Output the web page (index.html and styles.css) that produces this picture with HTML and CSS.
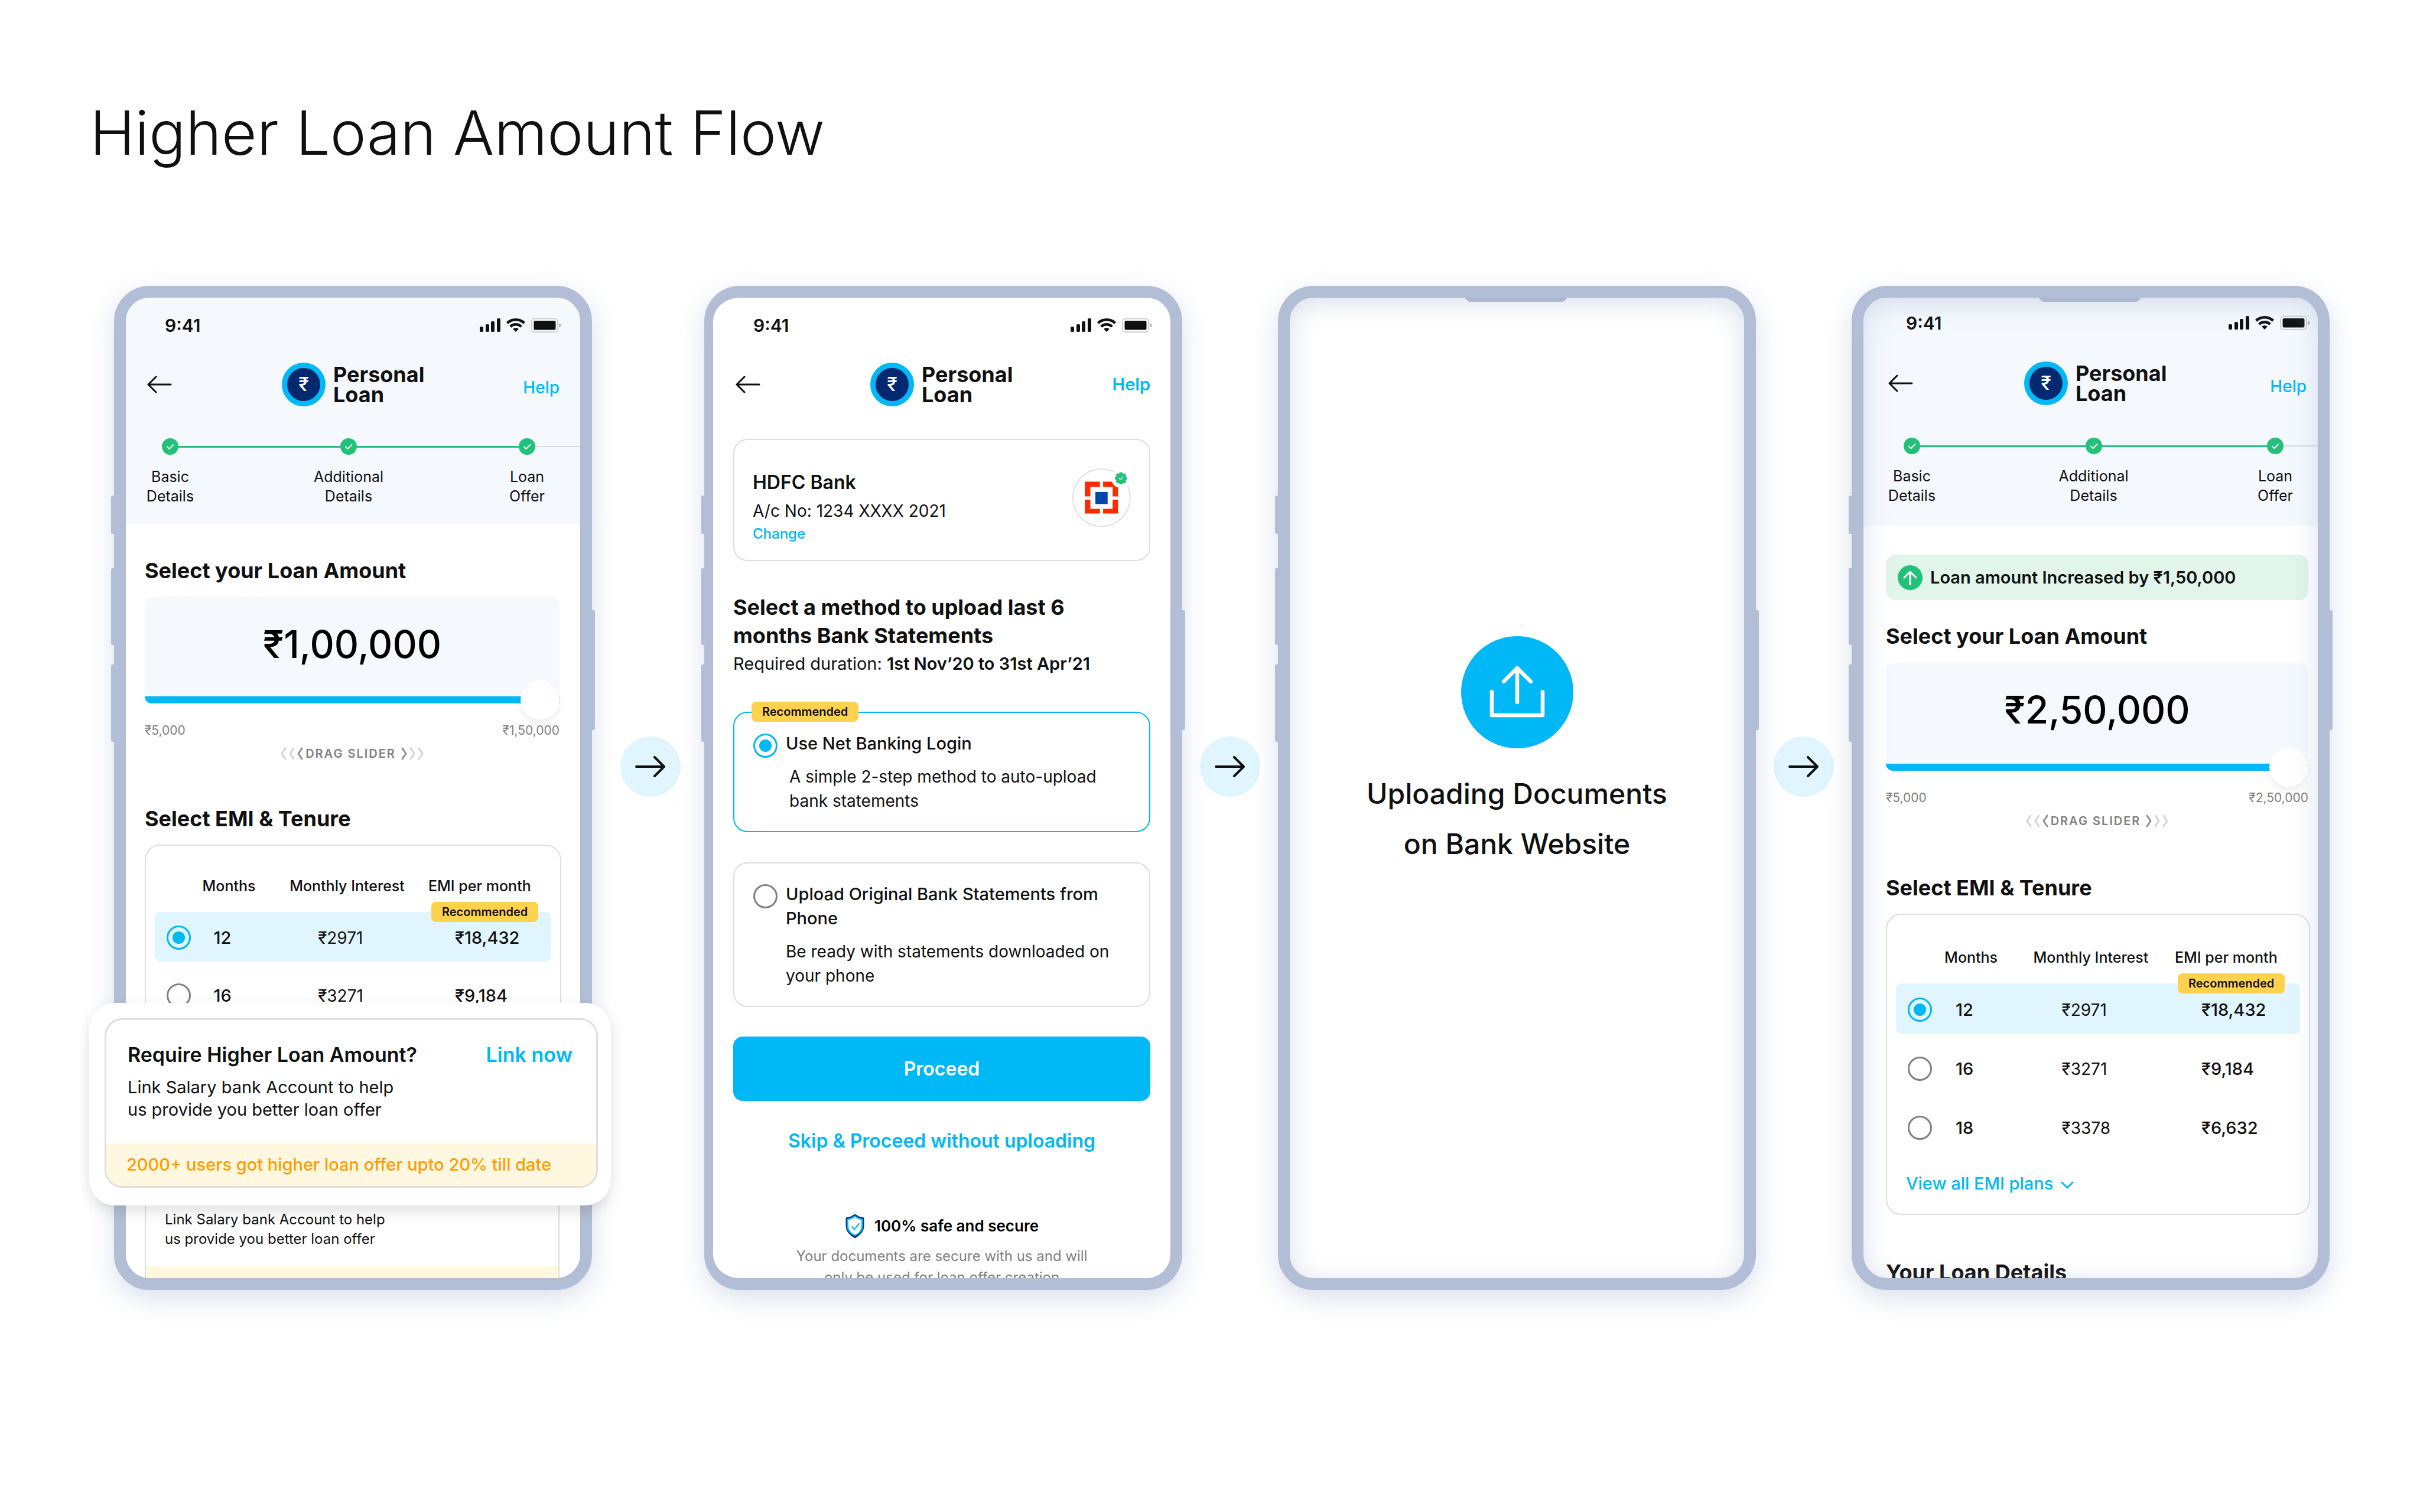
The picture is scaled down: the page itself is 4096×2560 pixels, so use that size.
FILE: index.html
```html
<!DOCTYPE html>
<html lang="en">
<head>
<meta charset="utf-8">
<title>Higher Loan Amount Flow</title>
<link rel="stylesheet" href="styles.css">
</head>
<body>
<svg class="sprite" aria-hidden="true">
  <symbol id="status" viewBox="0 0 138 26">
    <rect x="0" y="15" width="6" height="9" rx="2"/>
    <rect x="10" y="11" width="6" height="13" rx="2"/>
    <rect x="19" y="6" width="6" height="18" rx="2"/>
    <rect x="29" y="1" width="6" height="23" rx="2"/>
    <g fill="none" stroke="#101010" stroke-width="4.6">
      <path d="M46.500 9a21 21 0 0 1 29 0"/>
      <path d="M51.800 15a13 13 0 0 1 18.400 0"/>
    </g>
    <path d="M61 24l-4.800-5a6.800 6.800 0 0 1 9.600 0z"/>
    <rect x="88" y="1.500" width="44" height="22.500" rx="5" fill="none" stroke="#cfcfd2" stroke-width="2"/>
    <rect x="91.500" y="5" width="37" height="15.500" rx="2.500"/>
    <path d="M134.500 9q3 1.500 3 3.800t-3 3.800z" fill="#a9a9ad"/>
  </symbol>
  <symbol id="back" viewBox="0 0 42 30">
    <path d="M40 15H2M15 2L2 15l13 13" fill="none" stroke="#101010" stroke-width="3" stroke-linecap="round" stroke-linejoin="round"/>
  </symbol>
  <symbol id="next" viewBox="0 0 52 36">
    <path d="M2 18h47M33 2l16 16-16 16" fill="none" stroke="#101010" stroke-width="4" stroke-linecap="round" stroke-linejoin="round"/>
  </symbol>
  <symbol id="tick" viewBox="0 0 28 28">
    <circle cx="14" cy="14" r="14" fill="#21c17a"/>
    <path d="M9 14.500l3.500 3.500L19.500 11" fill="none" stroke="#fff" stroke-width="2" stroke-linecap="round" stroke-linejoin="round"/>
  </symbol>
  <symbol id="chevrons" viewBox="0 0 40 22">
    <g fill="none" stroke-width="3" stroke-linecap="round" stroke-linejoin="round">
      <path d="M9 2L3 11l6 9M23 2l-6 9 6 9" stroke="#d3d3d3"/>
      <path d="M37 2l-6 9 6 9" stroke="#8f8f8f"/>
    </g>
  </symbol>
</svg>

<h1 class="page-title">Higher Loan Amount Flow</h1>

<main class="flow">

  <section class="phone phone-offer" aria-label="Loan offer">
    <i class="key key-a"></i><i class="key key-b"></i><i class="key key-c"></i><i class="key key-d"></i>
    <div class="screen">
      <header class="head">
        <div class="status"><span>9:41</span><svg class="status-icons"><use href="#status"/></svg></div>
        <div class="appbar">
          <button class="back" aria-label="Back"><svg><use href="#back"/></svg></button>
          <div class="brand"><span class="coin">₹</span><span>Personal<br>Loan</span></div>
          <a class="help" href="#help">Help</a>
        </div>
        <ol class="steps">
          <li><svg><use href="#tick"/></svg>Basic<br>Details</li>
          <li><svg><use href="#tick"/></svg>Additional<br>Details</li>
          <li><svg><use href="#tick"/></svg>Loan<br>Offer</li>
        </ol>
      </header>
      <div class="body">
        <h2>Select your Loan Amount</h2>
        <div class="amount">
          <output>₹1,00,000</output>
          <input type="range" min="5000" max="150000" value="150000" aria-label="Loan amount">
        </div>
        <div class="limits"><span>₹5,000</span><span>₹1,50,000</span></div>
        <div class="drag"><svg><use href="#chevrons"/></svg><span>DRAG SLIDER</span><svg class="flip"><use href="#chevrons"/></svg></div>
        <h2>Select EMI &amp; Tenure</h2>
        <div class="plans">
          <table>
            <thead><tr><th></th><th>Months</th><th>Monthly Interest</th><th>EMI per month</th></tr></thead>
            <tbody>
              <tr class="chosen"><td><input type="radio" name="plan-a" aria-label="12 months" checked></td><td>12</td><td>₹2971</td><td>₹18,432<span class="badge">Recommended</span></td></tr>
              <tr><td><input type="radio" name="plan-a" aria-label="16 months"></td><td>16</td><td>₹3271</td><td>₹9,184</td></tr>
            </tbody>
          </table>
        </div>
        <div class="link-card">
          <p>Link Salary bank Account to help<br>us provide you better loan offer</p>
          <div class="strip"></div>
        </div>
      </div>
    </div>
    <aside class="popup">
      <div class="popup-card">
        <div class="popup-text">
          <div class="popup-head"><h3>Require Higher Loan Amount?</h3><a href="#link">Link now</a></div>
          <p>Link Salary bank Account to help<br>us provide you better loan offer</p>
        </div>
        <div class="strip">2000+ users got higher loan offer upto 20% till date</div>
      </div>
    </aside>
  </section>

  <div class="arrow arrow-first"><svg><use href="#next"/></svg></div>

  <section class="phone phone-method" aria-label="Upload method">
    <i class="key key-a"></i><i class="key key-b"></i><i class="key key-c"></i><i class="key key-d"></i>
    <div class="screen">
      <header class="head">
        <div class="status"><span>9:41</span><svg class="status-icons"><use href="#status"/></svg></div>
        <div class="appbar">
          <button class="back" aria-label="Back"><svg><use href="#back"/></svg></button>
          <div class="brand"><span class="coin">₹</span><span>Personal<br>Loan</span></div>
          <a class="help" href="#help">Help</a>
        </div>
      </header>
      <div class="body">
        <div class="bank">
          <div class="bank-text">
            <h3>HDFC Bank</h3>
            <p>A/c No: 1234 XXXX 2021</p>
            <a href="#change">Change</a>
          </div>
          <svg class="bank-logo" viewBox="112 60 464 464" role="img" aria-label="HDFC Bank">
            <circle cx="343" cy="293" r="227" fill="#fff" stroke="#dfdfdf" stroke-width="9"/>
            <path fill="#ff2a00" d="M211 166h120v42h-76v75h-44zM356 166h119v117h-43v-75h-76zM211 308h44v73h76v37H211zM432 308h43v110H356v-37h76z"/>
            <path fill="#0047ab" d="M295 247h97v96h-97z"/>
            <circle cx="498" cy="139" r="77" fill="#fff"/>
            <g fill="#21c17a">
              <circle cx="498" cy="139" r="38"/>
              <circle cx="498" cy="106" r="15"/><circle cx="498" cy="172" r="15"/>
              <circle cx="465" cy="139" r="15"/><circle cx="531" cy="139" r="15"/>
              <circle cx="474" cy="115" r="15"/><circle cx="522" cy="115" r="15"/>
              <circle cx="474" cy="163" r="15"/><circle cx="522" cy="163" r="15"/>
            </g>
            <path d="M484 139l10 10 21-21" fill="none" stroke="#fff" stroke-width="7" stroke-linecap="round" stroke-linejoin="round"/>
          </svg>
        </div>
        <h2 class="method-title">Select a method to upload last 6<br>months Bank Statements</h2>
        <p class="duration">Required duration: <b>1st Nov’20 to 31st Apr’21</b></p>
        <div class="option selected">
          <span class="badge">Recommended</span>
          <input type="radio" name="method" id="net" checked>
          <label for="net"><strong>Use Net Banking Login</strong><span class="indent">A simple 2-step method to auto-upload<br>bank statements</span></label>
        </div>
        <div class="option">
          <input type="radio" name="method" id="upload">
          <label for="upload"><strong>Upload Original Bank Statements from<br>Phone</strong><span>Be ready with statements downloaded on<br>your phone</span></label>
        </div>
        <button class="proceed">Proceed</button>
        <a class="skip" href="#skip">Skip &amp; Proceed without uploading</a>
        <div class="safe">
          <svg viewBox="0 0 34 42"><path d="M17 1q6 5 15 6v13.500q0 12.500-15 20.500Q2 33 2 20.500V7q9-1 15-6z" fill="#002970" stroke="#002970" stroke-width="1" stroke-linejoin="round"/><path d="M17 2.800q6 4.600 13.800 5.600v12q0 11.200-13.800 17.600Q3.200 31.600 3.200 20.400v-12q7.800-1 13.800-5.600z" fill="#00b8f5"/><path d="M17 5.800q5 3.600 11 4.600v10q0 10-11 15.200Q6 30.400 6 20.400v-10q6-1 11-4.600z" fill="#fff"/><path d="M12 22l4 4.500 8-9.500" fill="none" stroke="#00b8f5" stroke-width="2.200" stroke-linecap="round" stroke-linejoin="round"/></svg>
          <b>100% safe and secure</b>
        </div>
        <p class="safe-note">Your documents are secure with us and will<br>only be used for loan offer creation</p>
      </div>
    </div>
  </section>

  <div class="arrow"><svg><use href="#next"/></svg></div>

  <section class="phone notched phone-upload" aria-label="Uploading">
    <i class="key key-a"></i><i class="key key-b"></i><i class="key key-c"></i><i class="key key-d"></i>
    <div class="screen">
      <svg class="upload" viewBox="0 0 190 190"><circle cx="95" cy="95" r="95" fill="#00b8f5"/><path d="M52 94v40h86V94M95 112V54M72 77l23-23 23 23" fill="none" stroke="#fff" stroke-width="6.500" stroke-linecap="round" stroke-linejoin="round"/></svg>
      <p>Uploading Documents<br>on Bank Website</p>
    </div>
    <svg class="notch" viewBox="0 0 174 10" preserveAspectRatio="none"><path d="M0 0h174q-4 8-9 8H9Q4 8 0 0z"/></svg>
  </section>

  <div class="arrow"><svg><use href="#next"/></svg></div>

  <section class="phone notched phone-raised" aria-label="Raised loan offer">
    <i class="key key-a"></i><i class="key key-b"></i><i class="key key-c"></i><i class="key key-d"></i>
    <div class="screen">
      <header class="head">
        <div class="status"><span>9:41</span><svg class="status-icons"><use href="#status"/></svg></div>
        <div class="appbar">
          <button class="back" aria-label="Back"><svg><use href="#back"/></svg></button>
          <div class="brand"><span class="coin">₹</span><span>Personal<br>Loan</span></div>
          <a class="help" href="#help">Help</a>
        </div>
        <ol class="steps">
          <li><svg><use href="#tick"/></svg>Basic<br>Details</li>
          <li><svg><use href="#tick"/></svg>Additional<br>Details</li>
          <li><svg><use href="#tick"/></svg>Loan<br>Offer</li>
        </ol>
      </header>
      <div class="body">
        <div class="notice">
          <svg viewBox="0 0 42 42"><circle cx="21" cy="21" r="21" fill="#21c17a"/><path d="M21 32V11M11 21l10-10 10 10" fill="none" stroke="#fff" stroke-width="3" stroke-linecap="round" stroke-linejoin="round"/></svg>
          Loan amount Increased by ₹1,50,000
        </div>
        <h2>Select your Loan Amount</h2>
        <div class="amount">
          <output>₹2,50,000</output>
          <input type="range" min="5000" max="250000" value="250000" aria-label="Loan amount">
        </div>
        <div class="limits"><span>₹5,000</span><span>₹2,50,000</span></div>
        <div class="drag"><svg><use href="#chevrons"/></svg><span>DRAG SLIDER</span><svg class="flip"><use href="#chevrons"/></svg></div>
        <h2>Select EMI &amp; Tenure</h2>
        <div class="plans">
          <table>
            <thead><tr><th></th><th>Months</th><th>Monthly Interest</th><th>EMI per month</th></tr></thead>
            <tbody>
              <tr class="chosen"><td><input type="radio" name="plan-b" aria-label="12 months" checked></td><td>12</td><td>₹2971</td><td>₹18,432<span class="badge">Recommended</span></td></tr>
              <tr><td><input type="radio" name="plan-b" aria-label="16 months"></td><td>16</td><td>₹3271</td><td>₹9,184</td></tr>
              <tr><td><input type="radio" name="plan-b" aria-label="18 months"></td><td>18</td><td>₹3378</td><td>₹6,632</td></tr>
            </tbody>
          </table>
          <a class="view-all" href="#plans">View all EMI plans <svg viewBox="0 0 22 14"><path d="M2 2l9 9 9-9"/></svg></a>
        </div>
        <h2>Your Loan Details</h2>
      </div>
    </div>
    <svg class="notch" viewBox="0 0 174 10" preserveAspectRatio="none"><path d="M0 0h174q-4 8-9 8H9Q4 8 0 0z"/></svg>
  </section>

</main>
</body>
</html>
```
FILE: styles.css
```css
:root {
  --ink: #101010;
  --blue: #00b8f5;
  --pale-blue: #e0f5fd;
  --frame: #b2bed5;
  --line: #dedede;
  --grey: #808080;
}

* { box-sizing: border-box; }

body {
  margin: 0;
  background: #fff;
  color: var(--ink);
  font-family: Inter, "Liberation Sans", sans-serif;
  font-size: 28px;
}

h1, h2, h3, p, ol { margin: 0; padding: 0; }
a { color: var(--blue); text-decoration: none; }
button { border: 0; padding: 0; background: none; font: inherit; }
.sprite { position: absolute; width: 0; height: 0; }

.page-title {
  padding: 157px 0 191px 152px;
  font-size: 103px;
  line-height: 136px;
  font-weight: 300;
}

.flow {
  display: grid;
  grid-template-columns: 1fr 190px 1fr 162px 1fr 162px 1fr;
  padding: 0 153px 100px 193px;
}

/* Device frame */
.phone {
  --left: 32px;
  --right: 35px;
  --block-gap: 74px;
  --row: 84px;
  --status: 94px;
  --bar: 106px;
  position: relative;
  aspect-ratio: 809 / 1700;
  min-width: 0;
  border: 20px solid var(--frame);
  border-radius: 60px;
  background: #fff;
  box-shadow: 0 14px 44px rgba(150, 165, 200, .36);
}
.phone-method { --left: 34px; --right: 34px; border-left-width: 15px; }
.phone-raised { --left: 38px; --right: 16px; --block-gap: 77px; --row: 86px; --status: 86px; --bar: 117px; }

.key { position: absolute; left: -25px; width: 6px; background: var(--frame); border-radius: 3px 0 0 3px; }
.phone-method .key { left: -20px; }
.key-a { top: 335px; height: 65px; }
.key-b { top: 458px; height: 130px; }
.key-c { top: 621px; height: 131px; }
.phone .key-d { left: auto; right: -25px; top: 529px; height: 203px; border-radius: 0 3px 3px 0; }

.screen { height: 100%; overflow: hidden; border-radius: 40px; }
.notched::after {
  content: "";
  position: absolute;
  inset: 0;
  border-radius: 40px;
  box-shadow: inset 0 8px 44px rgba(150, 165, 200, .36);
  pointer-events: none;
}
.notch { position: absolute; top: -1px; left: 50%; width: 174px; height: 10px; margin-left: -89px; fill: var(--frame); }

.arrow {
  display: flex;
  align-items: center;
  justify-content: center;
  align-self: center;
  justify-self: center;
  width: 102px;
  height: 102px;
  margin-bottom: 73px;
  border-radius: 50%;
  background: var(--pale-blue);
}
.arrow-first { margin-left: 7px; }
.arrow svg { width: 52px; height: 36px; }

/* Header */
.phone-offer .head, .phone-raised .head { background: #f5f9fe; }
.status {
  display: flex;
  align-items: center;
  justify-content: space-between;
  height: var(--status);
  padding: 0 calc(var(--right) - 3px) 0 calc(var(--left) + 34px);
  font-size: 30px;
  font-weight: 600;
}
.status-icons { width: 138px; height: 26px; fill: var(--ink); }
.appbar {
  display: flex;
  align-items: center;
  height: var(--bar);
  padding: 0 var(--right) 0 calc(var(--left) + 4px);
}
.back, .back svg { display: block; width: 42px; height: 30px; }
.brand {
  display: flex;
  align-items: center;
  gap: 13px;
  margin-left: 186px;
  font-size: 36px;
  line-height: 34px;
  font-weight: 700;
}
.phone-raised .brand { margin-left: 188px; }
.coin {
  width: 74px;
  height: 74px;
  border: 9px solid var(--blue);
  border-radius: 50%;
  background: #002970;
  color: #fff;
  font-size: 32px;
  line-height: 56px;
  font-weight: 500;
  text-align: center;
}
.help { margin-left: auto; font-weight: 500; line-height: 36px; }
.phone-offer .help, .phone-raised .help { padding-top: 10px; }
.phone-raised .help { margin-right: 3px; }
.phone-method .help { font-size: 29px; font-weight: 600; }

.steps {
  position: relative;
  display: flex;
  justify-content: space-between;
  padding: 38px 25px 31px 10px;
  list-style: none;
  font-size: 25px;
  line-height: 33px;
  text-align: center;
}
.phone-raised .steps { padding: 34px 7px 34px 17px; }
.steps::before, .steps::after { content: ""; position: absolute; left: 75px; right: 0; top: 51px; height: 2px; background: #d6dbe0; }
.steps::after { right: 90px; height: 3px; background: #21c17a; }
.phone-raised .steps::before, .phone-raised .steps::after { top: 47px; }
.phone-raised .steps::after { right: 72px; }
.steps li { position: relative; z-index: 1; width: 130px; }
.steps svg { display: block; width: 28px; height: 28px; margin: 0 auto 21px; }

/* Loan amount */
.body { padding: 0 var(--right) 0 var(--left); }
h2 { font-size: 36px; line-height: 44px; font-weight: 700; }
.phone-offer .head + .body { padding-top: 56px; }
.phone-raised .head + .body { padding-top: 49px; }
.amount {
  margin-top: 23px;
  padding-top: 40px;
  border-radius: 16px;
  background: #f5f9fe;
}
.amount output {
  display: block;
  margin-bottom: 48px;
  color: #000;
  font-size: 64px;
  line-height: 80px;
  font-weight: 500;
  text-align: center;
}
.phone-raised output { margin-bottom: 51px; }
.amount input {
  display: block;
  appearance: none;
  width: 100%;
  height: 12px;
  margin: 0;
  border-radius: 0 0 0 14px;
  background: var(--blue);
}
.amount input::-webkit-slider-thumb {
  appearance: none;
  width: 66px;
  height: 66px;
  border-radius: 50%;
  background: #fff;
  box-shadow: 0 8px 12px rgba(0, 0, 0, .06);
}
.limits {
  display: flex;
  justify-content: space-between;
  margin-top: 32px;
  color: var(--grey);
  font-size: 21px;
  line-height: 28px;
}
.drag {
  display: flex;
  align-items: center;
  justify-content: center;
  margin: 11px 0 var(--block-gap);
  color: var(--grey);
  font-size: 20px;
  line-height: 28px;
  font-weight: 600;
  letter-spacing: 2px;
}
.drag svg { width: 40px; height: 22px; margin-right: 3px; }
.drag .flip { margin: 0 0 0 8px; transform: scaleX(-1); }

/* EMI plans */
.plans {
  margin: 22px -3px 0 0;
  padding: 28px 15px 31px;
  border: 2px solid var(--line);
  border-radius: 26px;
}
.phone-offer .plans { padding-top: 24px; }
.plans table { width: 100%; table-layout: fixed; border-spacing: 0 14px; }
.plans th { height: 60px; padding: 0; font-size: 25px; font-weight: 500; text-align: left; white-space: nowrap; }
.plans th:nth-child(1) { width: 12%; }
.plans th:nth-child(2) { width: 22%; }
.plans th:nth-child(3) { width: 35%; }
.plans td { position: relative; height: var(--row); padding: 3px 0 0 45px; }
.plans td:nth-child(1) { padding-left: 20px; }
.plans td:nth-child(2) { padding-left: 19px; }
.plans td:nth-child(3) { padding-left: 48px; }
.plans td:nth-child(2), .plans td:nth-child(4) { font-size: 29px; font-weight: 500; }
.chosen td { background: var(--pale-blue); }
.chosen td:first-child { border-radius: 10px 0 0 10px; }
.chosen td:last-child { border-radius: 0 10px 10px 0; }
input[type="radio"] {
  flex: none;
  display: block;
  appearance: none;
  width: 41px;
  height: 41px;
  margin: 0;
  border: 3px solid var(--grey);
  border-radius: 50%;
}
input[type="radio"]:checked { border-color: var(--blue); background: radial-gradient(circle, var(--blue) 10px, transparent 11px); }
.badge {
  position: absolute;
  height: 34px;
  padding: 0 18px;
  border-radius: 8px;
  background: #ffd24d;
  font-size: 20px;
  line-height: 34px;
  font-weight: 600;
}
.plans .badge { top: -17px; left: 5px; }
.view-all { display: block; margin: 19px 0 0 17px; font-size: 29px; line-height: 40px; font-weight: 500; }
.view-all svg { width: 22px; height: 14px; margin-left: 5px; fill: none; stroke: var(--blue); stroke-width: 3; stroke-linecap: round; }
.plans + h2 { margin-top: 75px; }

/* Higher loan card */
.link-card { margin-top: 190px; padding-top: 83px; border: 2px solid var(--line); border-radius: 26px; }
.link-card p { padding: 0 32px 30px; font-size: 24px; line-height: 33px; }
.strip { min-height: 72px; background: #fff7df; }

.popup {
  position: absolute;
  left: -62px;
  right: -52px;
  bottom: 123px;
  padding: 26px 22px 30px 26px;
  border-radius: 44px;
  background: #fff;
  box-shadow: 0 10px 24px rgba(0, 0, 0, .12);
}
.popup-card { overflow: hidden; border: 3px solid var(--line); border-radius: 30px; }
.popup-text { padding: 37px 40px 38px 36px; font-size: 29px; line-height: 38px; }
.popup-head { display: flex; justify-content: space-between; margin-bottom: 14px; font-size: 34px; line-height: 44px; font-weight: 600; }
.popup h3 { font-size: 34px; font-weight: 600; }
.popup .strip { padding-left: 34px; color: #ff9d00; font-size: 29px; line-height: 72px; font-weight: 500; }

/* Upload method */
.bank {
  display: flex;
  justify-content: space-between;
  margin: 39px 0 54px;
  padding: 48px 31px 29px;
  border: 2px solid var(--line);
  border-radius: 24px;
}
.bank h3 { font-size: 32px; line-height: 48px; font-weight: 600; }
.bank p { font-size: 28px; line-height: 48px; }
.bank a { display: block; font-size: 24px; line-height: 30px; font-weight: 500; }
.bank-logo { width: 99px; height: 99px; }
.method-title { line-height: 48px; }
.duration { margin-top: 4px; font-size: 29px; line-height: 40px; }
.duration b { font-weight: 600; }
.option {
  position: relative;
  display: flex;
  gap: 14px;
  margin-top: 51px;
  padding: 31px 32px 30px;
  border: 2px solid var(--line);
  border-radius: 24px;
  line-height: 41px;
}
.option.selected { margin-top: 61px; border-color: var(--blue); }
.option input { margin-top: 4px; }
.option strong, .option label span { display: block; }
.option strong { font-size: 29px; font-weight: 500; }
.option label span { margin-top: 16px; }
.option label .indent { padding-left: 6px; }
.option .badge { top: -19px; left: 29px; }
.proceed {
  display: block;
  width: 100%;
  height: 109px;
  margin-top: 50px;
  border-radius: 16px;
  background: var(--blue);
  color: #fff;
  font-size: 32px;
  font-weight: 600;
}
.skip { display: block; margin-top: 44px; font-size: 32px; line-height: 48px; font-weight: 600; text-align: center; }
.safe {
  display: flex;
  align-items: center;
  justify-content: center;
  gap: 16px;
  margin-top: 99px;
  color: #000;
  font-size: 26px;
  line-height: 40px;
}
.safe b { font-weight: 600; }
.safe svg { width: 34px; height: 42px; }
.safe-note { margin-top: 12px; color: var(--grey); font-size: 24px; line-height: 36px; text-align: center; }

/* Uploading */
.phone-upload .screen { padding-top: 573px; text-align: center; font-size: 48px; line-height: 85px; font-weight: 500; }
.upload { display: block; width: 190px; height: 190px; margin: 0 auto 34px; }

/* Raised offer */
.notice {
  display: flex;
  align-items: center;
  gap: 13px;
  height: 77px;
  margin-bottom: 39px;
  padding-left: 20px;
  border-radius: 16px;
  background: #e2f5ea;
  font-size: 29px;
  font-weight: 600;
}
.notice svg { width: 42px; height: 42px; }
```
